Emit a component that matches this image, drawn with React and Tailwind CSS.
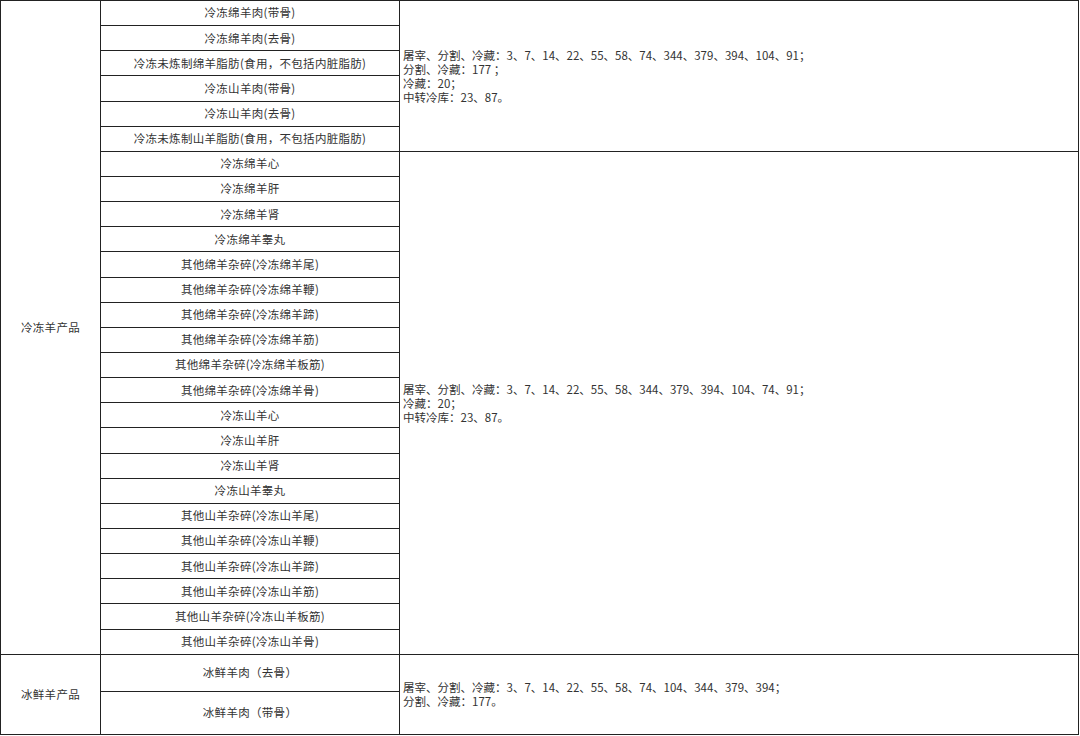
const font = {
  fontFamily: '"Noto Sans CJK SC", "Liberation Sans", sans-serif',
};

const frozenGroups = [
  {
    items: [
      "冷冻绵羊肉(带骨)",
      "冷冻绵羊肉(去骨)",
      "冷冻未炼制绵羊脂肪(食用，不包括内脏脂肪)",
      "冷冻山羊肉(带骨)",
      "冷冻山羊肉(去骨)",
      "冷冻未炼制山羊脂肪(食用，不包括内脏脂肪)",
    ],
    notes: [
      "屠宰、分割、冷藏：3、7、14、22、55、58、74、344、379、394、104、91；",
      "分割、冷藏：177 ；",
      "冷藏：20；",
      "中转冷库：23、87。",
    ],
  },
  {
    items: [
      "冷冻绵羊心",
      "冷冻绵羊肝",
      "冷冻绵羊肾",
      "冷冻绵羊睾丸",
      "其他绵羊杂碎(冷冻绵羊尾)",
      "其他绵羊杂碎(冷冻绵羊鞭)",
      "其他绵羊杂碎(冷冻绵羊蹄)",
      "其他绵羊杂碎(冷冻绵羊筋)",
      "其他绵羊杂碎(冷冻绵羊板筋)",
      "其他绵羊杂碎(冷冻绵羊骨)",
      "冷冻山羊心",
      "冷冻山羊肝",
      "冷冻山羊肾",
      "冷冻山羊睾丸",
      "其他山羊杂碎(冷冻山羊尾)",
      "其他山羊杂碎(冷冻山羊鞭)",
      "其他山羊杂碎(冷冻山羊蹄)",
      "其他山羊杂碎(冷冻山羊筋)",
      "其他山羊杂碎(冷冻山羊板筋)",
      "其他山羊杂碎(冷冻山羊骨)",
    ],
    notes: [
      "屠宰、分割、冷藏：3、7、14、22、55、58、344、379、394、104、74、91；",
      "冷藏：20；",
      "中转冷库：23、87。",
    ],
  },
];

const chilled = {
  items: ["冰鲜羊肉（去骨）", "冰鲜羊肉（带骨）"],
  notes: [
    "屠宰、分割、冷藏：3、7、14、22、55、58、74、104、344、379、394；",
    "分割、冷藏：177。",
  ],
};

const cell = "border border-[#222] p-0";

function Notes({ lines }) {
  return (
    <div className="pl-[3px] text-left leading-[14px]">
      {lines.map((line) => (
        <div key={line}>{line}</div>
      ))}
    </div>
  );
}

export default function App() {
  const frozenCount = frozenGroups.reduce((n, g) => n + g.items.length, 0);

  return (
    <div className="h-[736px] w-[1080px] overflow-hidden bg-white" style={font}>
      <table className="w-[1079px] table-fixed border-collapse text-[11.5px] text-[#333]">
        <colgroup>
          <col className="w-[100px]" />
          <col className="w-[299px]" />
          <col />
        </colgroup>
        <tbody>
          {frozenGroups.map((group, gi) =>
            group.items.map((item, i) => (
              <tr key={item} className="h-[25.15px]">
                {gi === 0 && i === 0 && (
                  <td rowSpan={frozenCount} className={`${cell} text-center align-middle tracking-[0.3px]`}>
                    冷冻羊产品
                  </td>
                )}
                <td className={`${cell} text-center align-middle tracking-[0.3px]`}>{item}</td>
                {i === 0 && (
                  <td rowSpan={group.items.length} className={`${cell} align-middle`}>
                    <Notes lines={group.notes} />
                  </td>
                )}
              </tr>
            ))
          )}
          {chilled.items.map((item, i) => (
            <tr key={item} className={i === 0 ? "h-[37px]" : "h-[43px]"}>
              {i === 0 && (
                <td rowSpan={2} className={`${cell} text-center align-middle tracking-[0.3px]`}>
                  冰鲜羊产品
                </td>
              )}
              <td className={`${cell} text-center align-middle tracking-[0.3px]`}>{item}</td>
              {i === 0 && (
                <td rowSpan={2} className={`${cell} align-middle`}>
                  <Notes lines={chilled.notes} />
                </td>
              )}
            </tr>
          ))}
        </tbody>
      </table>
    </div>
  );
}
